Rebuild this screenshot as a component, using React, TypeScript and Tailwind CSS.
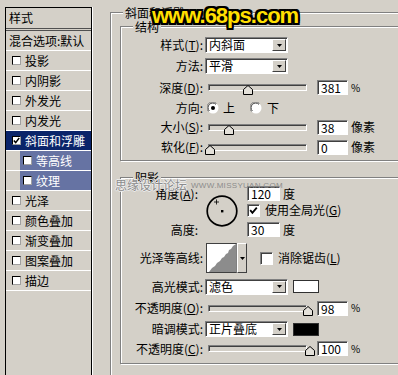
import type { ReactNode } from "react"

const STYLES = [
  { label: "投影" },
  { label: "内阴影" },
  { label: "外发光" },
  { label: "内发光" },
  { label: "斜面和浮雕", checked: true, selected: true },
  { label: "等高线", sub: true },
  { label: "纹理", sub: true },
  { label: "光泽" },
  { label: "颜色叠加" },
  { label: "渐变叠加" },
  { label: "图案叠加" },
  { label: "描边" },
]

function SmallBox({ checked }: { checked?: boolean }) {
  return (
    <span className="w-[9px] h-[9px] shrink-0 bg-white border border-t-black border-l-black border-b-[#a0a0a0] border-r-[#a0a0a0] flex items-center justify-center">
      {checked && (
        <svg width="7" height="7" viewBox="0 0 7 7">
          <path d="M0.8 3.4 L2.7 5.6 L6.2 1" stroke="black" strokeWidth="1.5" fill="none" />
        </svg>
      )}
    </span>
  )
}

function CheckBox({ checked }: { checked?: boolean }) {
  return (
    <span className="w-[13px] h-[13px] shrink-0 bg-white border border-t-[#808080] border-l-[#808080] border-b-white border-r-white shadow-[inset_1px_1px_0_#404040] flex items-center justify-center">
      {checked && (
        <svg width="9" height="9" viewBox="0 0 9 9">
          <path d="M1.2 4.2 L3.4 6.8 L7.8 1.6" stroke="black" strokeWidth="1.8" fill="none" />
        </svg>
      )}
    </span>
  )
}

function Radio({ checked }: { checked?: boolean }) {
  return (
    <svg width="12" height="12" viewBox="0 0 12 12" className="shrink-0">
      <circle cx="6" cy="6" r="5.5" fill="white" />
      <path d="M1.5 9.5 A5.5 5.5 0 0 1 9.5 1.5" stroke="#808080" strokeWidth="1" fill="none" />
      <path d="M2.4 9 A4.5 4.5 0 0 1 9 2.4" stroke="#404040" strokeWidth="1" fill="none" />
      {checked && <circle cx="6" cy="6" r="2" fill="black" />}
    </svg>
  )
}

function Arrow() {
  return (
    <svg width="5" height="3" viewBox="0 0 5 3">
      <polygon points="0,0 5,0 2.5,3" fill="black" />
    </svg>
  )
}

function Select({ text }: { text: string }) {
  return (
    <div className="ml-[2px] w-[83px] h-[16px] shrink-0 bg-white border border-t-[#808080] border-l-[#808080] border-b-white border-r-white shadow-[inset_1px_1px_0_#404040] flex items-center">
      <span className="flex-1 pl-[3px] leading-[14px]">{text}</span>
      <span className="w-[14px] h-[12px] mr-[1px] bg-[#d4d0c8] border border-t-white border-l-white border-b-[#404040] border-r-[#404040] flex items-center justify-center">
        <Arrow />
      </span>
    </div>
  )
}

function Field({ value, wide }: { value: string; wide?: boolean }) {
  return (
    <div
      className={
        wide
          ? "w-[33px] h-[15px] shrink-0 bg-white border border-t-[#808080] border-l-[#808080] border-b-white border-r-white shadow-[inset_1px_1px_0_#404040] pl-[3px] leading-[14px]"
          : "w-[31px] h-[15px] shrink-0 bg-white border border-t-[#808080] border-l-[#808080] border-b-white border-r-white shadow-[inset_1px_1px_0_#404040] pl-[3px] leading-[14px]"
      }
    >
      {value}
    </div>
  )
}

function Slider({ pos }: { pos: number }) {
  return (
    <div className="relative ml-[5px] w-[99px] h-[7px] shrink-0 bg-[#d4d0c8] border border-t-[#808080] border-l-[#808080] border-b-white border-r-white shadow-[inset_1px_1px_0_#404040]">
      <svg width="10" height="10" viewBox="0 0 10 10" className="absolute top-[0px]" style={{ left: pos }}>
        <polygon points="0.5,9.5 0.5,4.5 5,0.5 9.5,4.5 9.5,9.5" fill="#e4e1da" stroke="black" strokeWidth="1" />
      </svg>
    </div>
  )
}

function Label({ children }: { children: ReactNode }) {
  return <div className="w-[82px] shrink-0 text-right whitespace-nowrap">{children}</div>
}

function Legend({ children }: { children: ReactNode }) {
  return <div className="-mt-[8px] ml-[12px] w-fit px-[2px] bg-[#d4d0c8] leading-[16px]">{children}</div>
}

function Contour() {
  return (
    <div className="ml-[3px] flex w-[41px] h-[30px] shrink-0">
      <div className="w-[31px] h-[30px] bg-white border border-t-[#404040] border-l-[#404040] border-b-[#404040] border-r-[#808080]">
        <svg width="29" height="28" viewBox="0 0 29 28">
          <polygon
            points="2,28 5,24 8,22 10,19 13,17 15,14 17,13 19,10 21,9 22,6 24,5 26,2 29,0 29,28"
            fill="#8c8c8c"
          />
        </svg>
      </div>
      <div className="w-[10px] h-[30px] bg-[#d4d0c8] border border-t-white border-l-white border-b-[#404040] border-r-[#404040] flex items-center justify-center">
        <Arrow />
      </div>
    </div>
  )
}

function LeftPanel() {
  return (
    <div className="ml-[5px] mt-[7px] w-[87px] h-[380px] shrink-0 border border-black shadow-[1px_0_0_#fff]">
      <div className="h-[20px] flex items-center pl-[3px]">样式</div>
      <div className="h-[3px] border-y border-[#505050]" />
      <div className="h-[20px] border-b border-white flex items-center pl-[3px] whitespace-nowrap">混合选项:默认</div>
      {STYLES.map((s, i) =>
        s.sub ? (
          <div key={i} className="h-[20px] border-b border-white flex">
            <div className="w-[14px] shrink-0" />
            <div className="flex-1 bg-[#6673a3] text-white flex items-center pl-[3px] gap-[4px]">
              <SmallBox />
              {s.label}
            </div>
          </div>
        ) : (
          <div
            key={i}
            className={
              s.selected
                ? "h-[20px] border-b border-white flex items-center pl-[6px] gap-[4px] bg-[#0a246a] text-white"
                : "h-[20px] border-b border-white flex items-center pl-[6px] gap-[4px]"
            }
          >
            <SmallBox checked={s.checked} />
            {s.label}
          </div>
        )
      )}
    </div>
  )
}

export default function App() {
  return (
    <div className="relative w-[398px] h-[375px] overflow-hidden bg-[#d4d0c8] text-[12px] leading-[14px] text-black font-['Noto_Sans_CJK_SC','Noto_Sans_CJK_JP',sans-serif]">
      <div className="flex items-start">
        <LeftPanel />
        <div className="ml-[18px] mt-[12px] w-[320px] shrink-0 border border-[#808080] shadow-[inset_1px_1px_0_#fff,1px_1px_0_#fff] pb-[24px]">
          <Legend>斜面和浮雕</Legend>

          {/* 结构 */}
          <div className="ml-[9px] mt-[5px] w-[300px] border border-[#808080] shadow-[inset_1px_1px_0_#fff,1px_1px_0_#fff] pb-[3px]">
            <Legend>结构</Legend>
            <div className="flex items-center h-[20px]">
              <Label>样式(<u>T</u>):</Label>
              <Select text="内斜面" />
            </div>
            <div className="flex items-center h-[22px]">
              <Label>方法:</Label>
              <Select text="平滑" />
            </div>
            <div className="flex items-center h-[21px]">
              <Label>深度(<u>D</u>):</Label>
              <Slider pos={34} />
              <div className="ml-[10px]"><Field value="381" /></div>
              <span className="ml-[3px] text-[10px]">%</span>
            </div>
            <div className="flex items-center h-[19px]">
              <Label>方向:</Label>
              <div className="ml-[4px] flex items-center"><Radio checked /></div>
              <span className="ml-[4px]">上</span>
              <div className="ml-[15px] flex items-center"><Radio /></div>
              <span className="ml-[5px]">下</span>
            </div>
            <div className="flex items-center h-[20px]">
              <Label>大小(<u>S</u>):</Label>
              <Slider pos={15} />
              <div className="ml-[10px]"><Field value="38" /></div>
              <span className="ml-[3px]">像素</span>
            </div>
            <div className="flex items-center h-[20px]">
              <Label>软化(<u>F</u>):</Label>
              <Slider pos={-4} />
              <div className="ml-[10px]"><Field value="0" /></div>
              <span className="ml-[3px]">像素</span>
            </div>
          </div>

          {/* 阴影 */}
          <div className="ml-[9px] mt-[16px] w-[300px] border border-[#808080] shadow-[inset_1px_1px_0_#fff,1px_1px_0_#fff] pb-[5px]">
            <Legend>阴影</Legend>
            <div className="flex h-[54px]">
              <div className="w-[77px] shrink-0 flex flex-col">
                <div className="h-[15px] flex items-center justify-end">角度(<u>A</u>):</div>
                <div className="h-[18px]" />
                <div className="h-[21px] flex items-center justify-end">高度:</div>
              </div>
              <div className="w-[49px] shrink-0">
                <svg width="32" height="32" viewBox="0 0 32 32" className="ml-[8px] mt-[9px]">
                  <circle cx="16" cy="16" r="14.8" fill="none" stroke="black" strokeWidth="1.7" />
                  <rect x="15" y="15" width="2.4" height="2.4" fill="black" />
                  <path d="M10.5 4.5 V9.5 M8 7 H13" stroke="black" strokeWidth="0.8" />
                </svg>
              </div>
              <div className="flex flex-col">
                <div className="h-[15px] flex items-center">
                  <Field value="120" wide />
                  <span className="ml-[3px]">度</span>
                </div>
                <div className="h-[18px] flex items-center">
                  <CheckBox checked />
                  <span className="ml-[5px] whitespace-nowrap">使用全局光(<u>G</u>)</span>
                </div>
                <div className="h-[21px] flex items-center">
                  <Field value="30" wide />
                  <span className="ml-[3px]">度</span>
                </div>
              </div>
            </div>
            <div className="flex items-center h-[36px]">
              <Label>光泽等高线:</Label>
              <Contour />
              <div className="ml-[13px] flex items-center"><CheckBox /></div>
              <span className="ml-[5px] whitespace-nowrap">消除锯齿(<u>L</u>)</span>
            </div>
            <div className="flex items-center h-[21px]">
              <Label>高光模式:</Label>
              <Select text="滤色" />
              <div className="ml-[5px] w-[26px] h-[13px] bg-white border border-[#303030]" />
            </div>
            <div className="flex items-center h-[22px]">
              <Label>不透明度(<u>O</u>):</Label>
              <Slider pos={94} />
              <div className="ml-[10px]"><Field value="98" /></div>
              <span className="ml-[3px] text-[10px]">%</span>
            </div>
            <div className="flex items-center h-[20px]">
              <Label>暗调模式:</Label>
              <Select text="正片叠底" />
              <div className="ml-[5px] w-[26px] h-[13px] bg-black border border-[#303030]" />
            </div>
            <div className="flex items-center h-[19px]">
              <Label>不透明度(<u>C</u>):</Label>
              <Slider pos={96} />
              <div className="ml-[10px]"><Field value="100" /></div>
              <span className="ml-[3px] text-[10px]">%</span>
            </div>
          </div>
        </div>
      </div>

      {/* watermarks */}
      <div className="absolute left-[152px] top-[3px] font-['Liberation_Sans',sans-serif] font-bold text-[22px] leading-[26px] tracking-[-1px] text-[#ffdf00] [text-shadow:2px_0_0_#000,-2px_0_0_#000,0_2px_0_#000,0_-2px_0_#000,2px_2px_0_#000,-2px_-2px_0_#000,2px_-2px_0_#000,-2px_2px_0_#000]">
        www.68ps.com
      </div>
      <div className="absolute left-[115px] top-[178px] flex items-end text-[#8c8c8c]">
        <span className="text-[12px] leading-[14px] [text-shadow:1px_0_0_#eee,-1px_0_0_#eee,0_1px_0_#eee,0_-1px_0_#eee]">思缘设计论坛</span>
        <span className="ml-[4px] mb-[2px] font-['Liberation_Sans',sans-serif] text-[8px] leading-[9px] tracking-[0.3px]">WWW.MISSYUAN.COM</span>
      </div>
    </div>
  )
}
